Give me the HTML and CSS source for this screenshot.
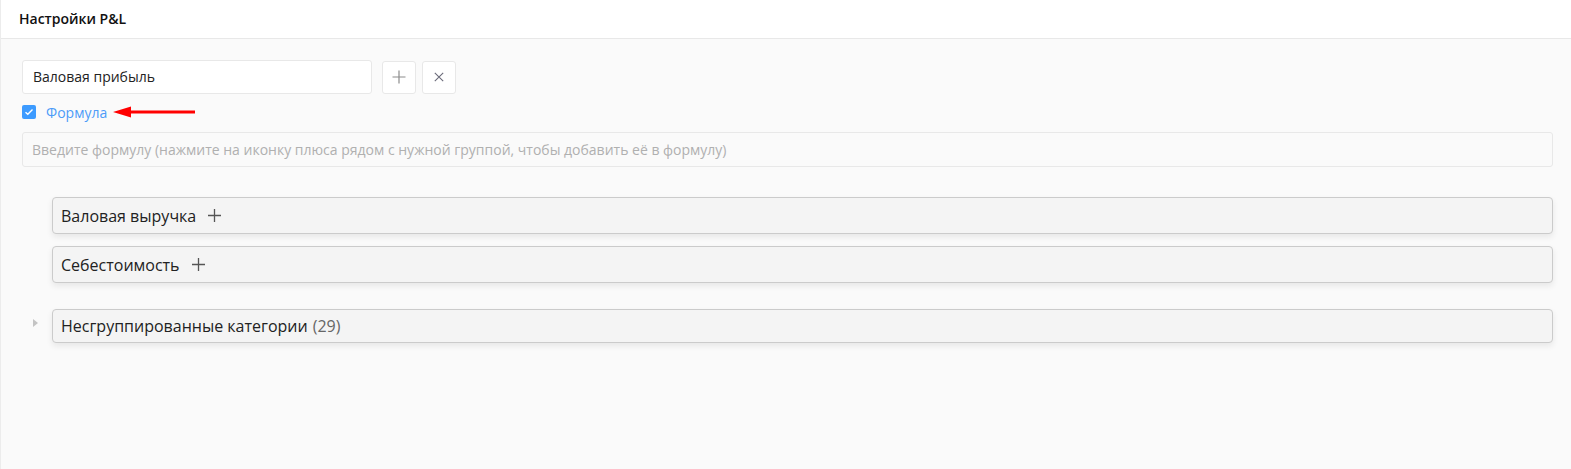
FILE: index.html
```html
<!DOCTYPE html>
<html lang="ru">
<head>
<meta charset="utf-8">
<title>Настройки P&amp;L</title>
<link rel="stylesheet" href="styles.css">
</head>
<body>
<div class="page">
  <header class="header">Настройки P&amp;L</header>
  <main class="content">
    <div class="name-row">
      <div class="name-input">Валовая прибыль</div>
      <button class="icon-btn" aria-label="Добавить">
        <svg width="14" height="14" viewBox="0 0 14 14"><path d="M7 0.5V13.5M0.5 7H13.5" stroke="#8c8c8c" stroke-width="1.2" fill="none"/></svg>
      </button>
      <button class="icon-btn" aria-label="Закрыть">
        <svg width="10" height="10" viewBox="0 0 10 10"><path d="M0.8 0.8L9.2 9.2M9.2 0.8L0.8 9.2" stroke="#6b6b7a" stroke-width="1.1" fill="none"/></svg>
      </button>
    </div>
    <div class="check-row">
      <span class="checkbox">
        <svg width="10" height="8" viewBox="0 0 10 8"><path d="M1.5 4.2L3.8 6.3L8.5 1.6" stroke="#fff" stroke-width="1.4" fill="none"/></svg>
      </span>
      <span class="check-label">Формула</span>
      <svg class="arrow" width="84" height="12" viewBox="0 0 84 12"><path d="M0 6L18 0.5V4.5H82V7.5H18V11.5Z" fill="#f00"/></svg>
    </div>
    <div class="formula-input">Введите формулу (нажмите на иконку плюса рядом с нужной группой, чтобы добавить её в формулу)</div>
    <div class="groups">
      <div class="group-row">
        <span class="caret-space"></span>
        <div class="group">Валовая выручка
          <svg class="plus" width="13" height="13" viewBox="0 0 13 13"><path d="M6.5 0V13M0 6.5H13" stroke="#555" stroke-width="1.3" fill="none"/></svg>
        </div>
      </div>
      <div class="group-row">
        <span class="caret-space"></span>
        <div class="group">Себестоимость
          <svg class="plus" width="13" height="13" viewBox="0 0 13 13"><path d="M6.5 0V13M0 6.5H13" stroke="#555" stroke-width="1.3" fill="none"/></svg>
        </div>
      </div>
      <div class="group-row ungrouped">
        <span class="caret-space"><svg width="5" height="8" viewBox="0 0 5 8"><path d="M0 0L5 4L0 8Z" fill="#c4c4c4"/></svg></span>
        <div class="group">Несгруппированные категории <span class="count">(29)</span></div>
      </div>
    </div>
  </main>
</div>
</body>
</html>
```

FILE: styles.css
```css
html, body {
  margin: 0;
  padding: 0;
  height: 100%;
}
body {
  font-family: "Open Sans", "Noto Sans", sans-serif;
  color: #222;
  background: #fafafa;
}
.page {
  min-height: 100%;
  border-left: 1px solid #ececec;
  box-sizing: border-box;
  background: #fafafa;
}
.header {
  height: 39px;
  box-sizing: border-box;
  background: #fff;
  border-bottom: 1px solid #e8e8e8;
  padding: 10px 0 0 18px;
  font-size: 14px;
  font-weight: 600;
  color: #111;
  line-height: 18px;
}
.content {
  padding: 21px 22px 0 21px;
}
.name-row {
  display: flex;
  align-items: center;
  gap: 6px;
}
.name-input {
  width: 350px;
  height: 34px;
  box-sizing: border-box;
  background: #fff;
  border: 1px solid #e8e8e8;
  border-radius: 3px;
  padding: 0 10px;
  font-size: 14px;
  line-height: 32px;
  color: #222;
  margin-right: 4px;
}
.icon-btn {
  width: 34px;
  height: 33px;
  box-sizing: border-box;
  background: #fff;
  border: 1px solid #e8e8e8;
  border-radius: 3px;
  display: flex;
  align-items: center;
  justify-content: center;
  padding: 0;
}
.check-row {
  display: flex;
  align-items: center;
  height: 24px;
  margin-top: 6px;
}
.checkbox {
  width: 14px;
  height: 14px;
  border-radius: 2px;
  background: #3d9bff;
  display: flex;
  align-items: center;
  justify-content: center;
}
.check-label {
  font-size: 14px;
  color: #4d9cf8;
  margin-left: 10px;
}
.arrow {
  margin-left: 6px;
}
.formula-input {
  margin-top: 8px;
  height: 35px;
  box-sizing: border-box;
  border: 1px solid #e8e8e8;
  border-radius: 3px;
  background: #fafafa;
  padding: 0 9px;
  font-size: 14px;
  line-height: 33px;
  color: #b0b0b0;
  margin-right: -4px;
}
.groups {
  display: flex;
  flex-direction: column;
  margin-top: 30px;
  margin-right: -4px;
}
.group-row {
  display: flex;
  align-items: flex-start;
  margin-bottom: 12px;
}
.group-row.ungrouped {
  margin-top: 14px;
}
.caret-space {
  width: 30px;
  flex: none;
  display: flex;
  justify-content: flex-start;
  padding: 10px 0 0 11px;
  box-sizing: border-box;
}
.group {
  flex: 1;
  height: 37px;
  box-sizing: border-box;
  background: #f4f4f4;
  border: 1px solid #cbcbcb;
  border-radius: 4px;
  box-shadow: 0 3px 6px rgba(0,0,0,0.08);
  padding: 0 8px;
  display: flex;
  align-items: center;
  font-size: 16px;
  color: #222;
}
.ungrouped .group {
  height: 34px;
}
.plus {
  margin-left: 12px;
}
.count {
  color: #666;
  margin-left: 5px;
}
```
